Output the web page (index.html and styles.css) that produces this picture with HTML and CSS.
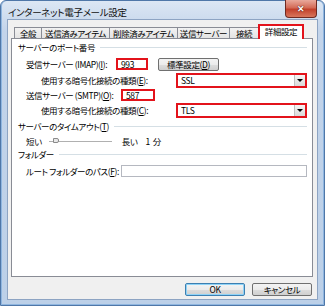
FILE: index.html
```html
<!DOCTYPE html>
<html lang="ja">
<head>
    <meta charset="UTF-8">
    <title>インターネット電子メール設定</title>
    <link rel="stylesheet" href="styles.css">
</head>
<body>
    <div class="window">
        <div class="titlebar">
            <span class="title">インターネット電子メール設定</span>
            <span class="close">✕</span>
        </div>

        <div class="client">
            <!-- tab strip -->
            <div class="tabs">
                <span class="tab w-general">全般</span>
                <span class="tab w-long">送信済みアイテム</span>
                <span class="tab w-long">削除済みアイテム</span>
                <span class="tab w-server">送信サーバー</span>
                <span class="tab w-conn">接続</span>
                <span class="tab selected mark">詳細設定</span>
            </div>

            <div class="panel">
                <div class="group-head"><span>サーバーのポート番号</span></div>

                <div class="row r-imap">
                    <span class="label w-imap">受信サーバー (IMAP)(<u>I</u>):</span>
                    <span class="field mark port-in">993</span>
                    <span class="button std">標準設定(<u>D</u>)</span>
                </div>

                <div class="row r-combo">
                    <span class="label sub">使用する暗号化接続の種類(<u>E</u>):</span>
                    <span class="combo mark">SSL<span class="drop"></span></span>
                </div>

                <div class="row r-smtp">
                    <span class="label w-smtp">送信サーバー (SMTP)(<u>O</u>):</span>
                    <span class="field mark port-out">587</span>
                </div>

                <div class="row r-combo2">
                    <span class="label sub">使用する暗号化接続の種類(<u>C</u>):</span>
                    <span class="combo mark">TLS<span class="drop"></span></span>
                </div>

                <div class="group-head g-timeout"><span>サーバーのタイムアウト(<u>T</u>)</span></div>

                <div class="row r-slider">
                    <span class="label">短い</span>
                    <span class="slider"><span class="thumb"></span></span>
                    <span class="label">長い</span>
                    <span class="label minutes">1&nbsp;&nbsp;分</span>
                </div>

                <div class="group-head g-folder"><span>フォルダー</span></div>

                <div class="row r-path">
                    <span class="label w-smtp">ルート フォルダーのパス(<u>F</u>):</span>
                    <span class="field path"></span>
                </div>
            </div>

            <div class="actions">
                <span class="button default">OK</span>
                <span class="button">キャンセル</span>
            </div>
        </div>
    </div>
</body>
</html>
```

FILE: styles.css
```css
body {
    margin: 0;
    font-family: "Noto Sans CJK JP", "Noto Sans", sans-serif;
    font-size: 8.5px;
    letter-spacing: -0.4px;
    font-feature-settings: "palt";
    color: #000;
    background: #fff;
}

.window {
    width: 325px;
    height: 306px;
    box-sizing: border-box;
    padding: 0 6px 5px 6px;
    border: 1px solid #4f77a8;
    border-radius: 6px 6px 0 0;
    background: linear-gradient(#dce7f4, #c3d4ea 30px, #bcd0e8);
    box-shadow: inset 1px 0 0 #8fb6e0, inset -1px 0 0 #8fb6e0, inset 0 -1px 0 #8fb6e0;
    display: flex;
    flex-direction: column;
}

.titlebar {
    height: 18px;
    display: flex;
    align-items: center;
    position: relative;
}

.title {
    font-size: 9.5px;
    letter-spacing: -0.3px;
    margin-left: 1px;
    margin-top: 4px;
    color: #111;
}

.close {
    position: absolute;
    right: 1px;
    top: -1px;
    width: 32px;
    height: 18px;
    box-sizing: border-box;
    border: 1px solid #6e2a22;
    border-top: none;
    border-radius: 0 0 4px 4px;
    background: linear-gradient(#e9a99c, #d46b57 45%, #c2412c 55%, #d8765c);
    color: #fff;
    font-size: 9px;
    font-weight: bold;
    letter-spacing: 0;
    text-align: center;
    line-height: 17px;
    text-shadow: 0 0 1px #4b0e08, 0 0 1px #4b0e08;
}

.client {
    flex: 1;
    background: #f0f0f0;
    border: 1px solid #8da4c3;
    padding: 4px 4px 0 3px;
    display: flex;
    flex-direction: column;
}

/* tabs */
.tabs {
    display: flex;
    align-items: flex-end;
    height: 14px;
    padding-left: 3px;
    position: relative;
    z-index: 1;
}

.tab {
    height: 11px;
    box-sizing: border-box;
    border: 1px solid #898c95;
    border-bottom: none;
    border-right: none;
    background: linear-gradient(#f2f2f2, #e3e3e3);
    text-align: center;
    line-height: 10px;
    white-space: nowrap;
    overflow: hidden;
}

.w-general { width: 27px; }
.w-long { width: 68px; }
.w-server { width: 52px; }
.w-conn { width: 29px; border-right: none; }

.tab.selected {
    width: 46px;
    height: 15px;
    margin-bottom: -1px;
    background: #fff;
    line-height: 11px;
}

.mark {
    border: 2px solid #e3131b !important;
}

.tab.mark {
    border-bottom: none !important;
}

/* panel */
.panel {
    height: 239px;
    box-sizing: border-box;
    background: #fff;
    border: 1px solid #898c95;
    padding: 2px 5px 0 6px;
}

.group-head {
    display: flex;
    align-items: center;
    height: 12px;
}

.group-head::after {
    content: "";
    flex: 1;
    height: 1px;
    margin-left: 5px;
    background: #d5dfe5;
}

.g-timeout { margin-top: 2px; }
.g-folder { margin-top: 1px; }

.row {
    display: flex;
    align-items: center;
    padding-left: 8px;
}

.r-imap { height: 14px; margin-top: 4px; }
.r-combo { height: 16px; margin-top: 1px; }
.r-smtp { height: 14px; margin-top: 0; }
.r-combo2 { height: 16px; margin-top: 0; }
.r-slider { height: 12px; margin-top: 3px; }
.r-path { height: 14px; margin-top: 4px; }

.label { white-space: nowrap; }
.w-imap { width: 90px; }
.w-smtp { width: 95px; }
.sub { margin-left: 15px; }

.field {
    height: 12px;
    box-sizing: border-box;
    border: 1px solid #abadb3;
    background: #fff;
    padding-left: 3px;
    line-height: 8px;
}

.port-in { width: 32px; }
.port-out { width: 34px; }
.path { flex: 1; height: 12px; border-color: #b5b8c0; }

.combo {
    margin-left: auto;
    width: 131px;
    height: 15px;
    box-sizing: border-box;
    display: flex;
    align-items: center;
    padding-left: 3px;
    background: #fff;
    line-height: 10px;
}

.drop {
    margin-left: auto;
    width: 10px;
    height: 11px;
    background: linear-gradient(#f5f5f5, #d9d9d9);
    border-left: 1px solid #c0c0c0;
    position: relative;
}

.drop::after {
    content: "";
    position: absolute;
    left: 2px;
    top: 4px;
    border-left: 3px solid transparent;
    border-right: 3px solid transparent;
    border-top: 3px solid #000;
}

.button {
    height: 13px;
    box-sizing: border-box;
    border: 1px solid #707070;
    border-radius: 2px;
    background: linear-gradient(#f3f3f3, #ebebeb 50%, #dddddd 51%, #cfcfcf);
    text-align: center;
    line-height: 11px;
    white-space: nowrap;
}

.std {
    width: 61px;
    margin-left: 10px;
}

.slider {
    width: 63px;
    height: 1px;
    margin: 0 10px 0 7px;
    background: #b0b0b0;
    position: relative;
}

.thumb {
    position: absolute;
    left: 4px;
    top: -3px;
    width: 6px;
    height: 5px;
    box-sizing: border-box;
    border: 1px solid #8a8a8a;
    border-radius: 0 2px 2px 0;
    background: #e8e8e8;
}

.minutes { margin-left: 8px; }

.actions {
    display: flex;
    justify-content: flex-end;
    gap: 7px;
    margin-top: 6px;
    padding-right: 1px;
}

.actions .button { width: 60px; }

.button.default {
    border-color: #3c7fb1;
    box-shadow: inset 0 0 0 1px #8fd3f7;
}
```
